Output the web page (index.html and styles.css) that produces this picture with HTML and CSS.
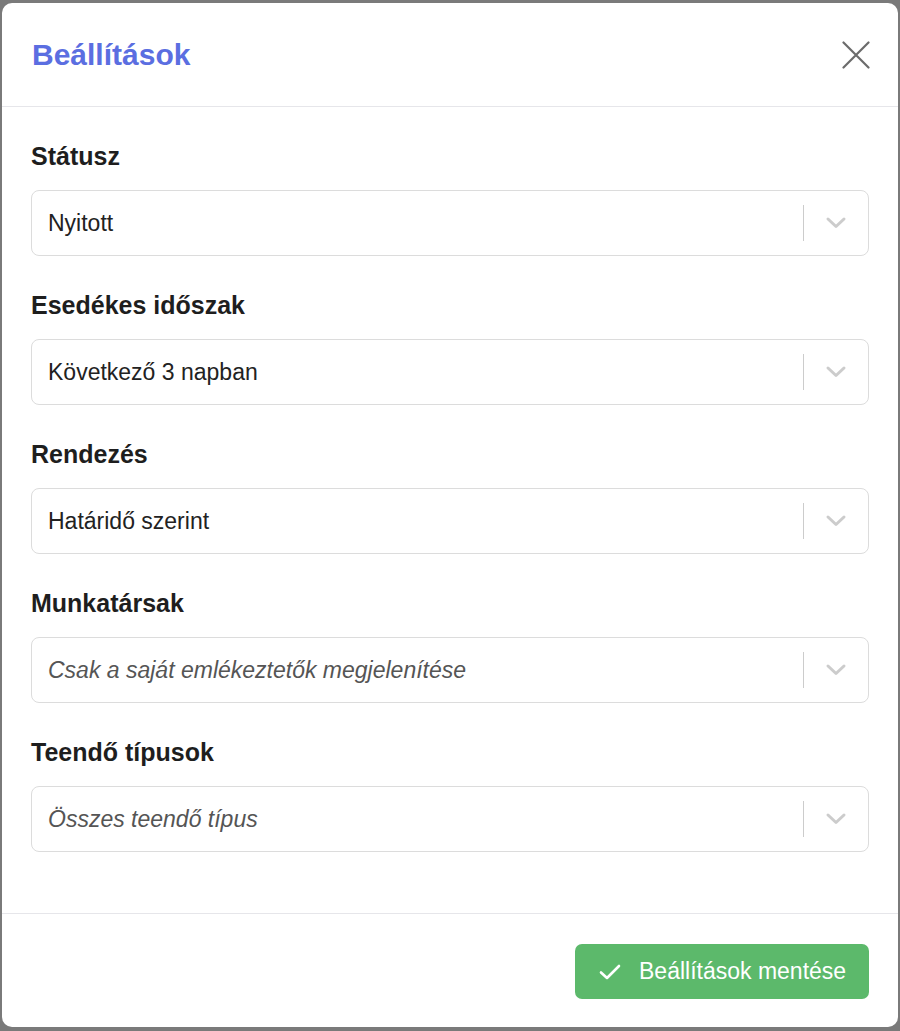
FILE: index.html
```html
<!DOCTYPE html>
<html lang="hu">
<head>
  <meta charset="UTF-8">
  <meta name="viewport" content="width=device-width, initial-scale=1.0">
  <title>Beállítások</title>
  <link rel="stylesheet" href="styles.css">
</head>
<body>
  <div class="modal">
    <div class="modal-header">
      <h2 class="modal-title">Beállítások</h2>
      <button class="close-btn" aria-label="Bezárás">
        <svg width="28" height="28" viewBox="0 0 28 28">
          <path d="M1.5 1.5 L26.5 26.5 M26.5 1.5 L1.5 26.5" stroke="#6b6b6b" stroke-width="2.2" stroke-linecap="round" fill="none"/>
        </svg>
      </button>
    </div>

    <div class="modal-body">
      <div class="field">
        <label class="field-label">Státusz</label>
        <div class="select">
          <span class="select-value">Nyitott</span>
          <span class="select-sep"></span>
          <span class="select-arrow">
            <svg width="22" height="14" viewBox="0 0 22 14"><path d="M3 3 L11 10.5 L19 3" stroke="#cccccc" stroke-width="3" fill="none" stroke-linecap="round" stroke-linejoin="round"/></svg>
          </span>
        </div>
      </div>

      <div class="field">
        <label class="field-label">Esedékes időszak</label>
        <div class="select">
          <span class="select-value">Következő 3 napban</span>
          <span class="select-sep"></span>
          <span class="select-arrow">
            <svg width="22" height="14" viewBox="0 0 22 14"><path d="M3 3 L11 10.5 L19 3" stroke="#cccccc" stroke-width="3" fill="none" stroke-linecap="round" stroke-linejoin="round"/></svg>
          </span>
        </div>
      </div>

      <div class="field">
        <label class="field-label">Rendezés</label>
        <div class="select">
          <span class="select-value">Határidő szerint</span>
          <span class="select-sep"></span>
          <span class="select-arrow">
            <svg width="22" height="14" viewBox="0 0 22 14"><path d="M3 3 L11 10.5 L19 3" stroke="#cccccc" stroke-width="3" fill="none" stroke-linecap="round" stroke-linejoin="round"/></svg>
          </span>
        </div>
      </div>

      <div class="field">
        <label class="field-label">Munkatársak</label>
        <div class="select">
          <span class="select-value placeholder">Csak a saját emlékeztetők megjelenítése</span>
          <span class="select-sep"></span>
          <span class="select-arrow">
            <svg width="22" height="14" viewBox="0 0 22 14"><path d="M3 3 L11 10.5 L19 3" stroke="#cccccc" stroke-width="3" fill="none" stroke-linecap="round" stroke-linejoin="round"/></svg>
          </span>
        </div>
      </div>

      <div class="field">
        <label class="field-label">Teendő típusok</label>
        <div class="select">
          <span class="select-value placeholder">Összes teendő típus</span>
          <span class="select-sep"></span>
          <span class="select-arrow">
            <svg width="22" height="14" viewBox="0 0 22 14"><path d="M3 3 L11 10.5 L19 3" stroke="#cccccc" stroke-width="3" fill="none" stroke-linecap="round" stroke-linejoin="round"/></svg>
          </span>
        </div>
      </div>
    </div>

    <div class="modal-footer">
      <button class="save-btn">
        <svg width="22" height="16" viewBox="0 0 22 16"><path d="M2 8.5 L8 14 L20 2" stroke="#fff" stroke-width="2.6" fill="none" stroke-linecap="round" stroke-linejoin="round"/></svg>
        Beállítások mentése
      </button>
    </div>
  </div>
</body>
</html>
```

FILE: styles.css
```css
html, body {
  margin: 0;
  height: 100%;
}
body {
  font-family: "Liberation Sans", Arial, Helvetica, sans-serif;
  background-color: #7a7a7a;
  padding: 3px 2px 4px 2px;
  box-sizing: border-box;
}
.modal {
  background-color: #fff;
  border-radius: 10px;
  height: 1024px;
  display: flex;
  flex-direction: column;
}
.modal-header {
  height: 104px;
  box-sizing: border-box;
  border-bottom: 1px solid #e6e6ea;
  display: flex;
  align-items: center;
  justify-content: space-between;
  padding: 0 28px 0 30px;
}
.modal-title {
  margin: 0;
  font-size: 30px;
  font-weight: bold;
  color: #5b6ee1;
}
.close-btn {
  background: none;
  border: none;
  padding: 0;
  display: flex;
  cursor: pointer;
}
.modal-body {
  flex: 1;
  padding: 36px 29px 0 29px;
  display: flex;
  flex-direction: column;
  gap: 36px;
}
.field {
  display: flex;
  flex-direction: column;
}
.field-label {
  font-size: 25px;
  font-weight: bold;
  color: #1e1e1e;
  line-height: 26px;
  margin-bottom: 21px;
}
.select {
  height: 66px;
  box-sizing: border-box;
  border: 1px solid #dcdcdc;
  border-radius: 8px;
  display: flex;
  align-items: center;
  padding-left: 16px;
}
.select-value {
  flex: 1;
  font-size: 23px;
  color: #222;
}
.select-value.placeholder {
  font-style: italic;
  color: #555;
}
.select-sep {
  width: 1px;
  height: 36px;
  background-color: #cccccc;
}
.select-arrow {
  width: 64px;
  display: flex;
  justify-content: center;
}
.modal-footer {
  height: 114px;
  box-sizing: border-box;
  border-top: 1px solid #e6e6ea;
  display: flex;
  justify-content: flex-end;
  align-items: flex-start;
  padding: 30px 29px 0 0;
}
.save-btn {
  height: 55px;
  width: 294px;
  background-color: #5cb96b;
  color: #fff;
  border: none;
  border-radius: 7px;
  font-family: inherit;
  font-size: 23px;
  display: flex;
  align-items: center;
  gap: 18px;
  padding: 0 0 0 24px;
  cursor: pointer;
}
```
